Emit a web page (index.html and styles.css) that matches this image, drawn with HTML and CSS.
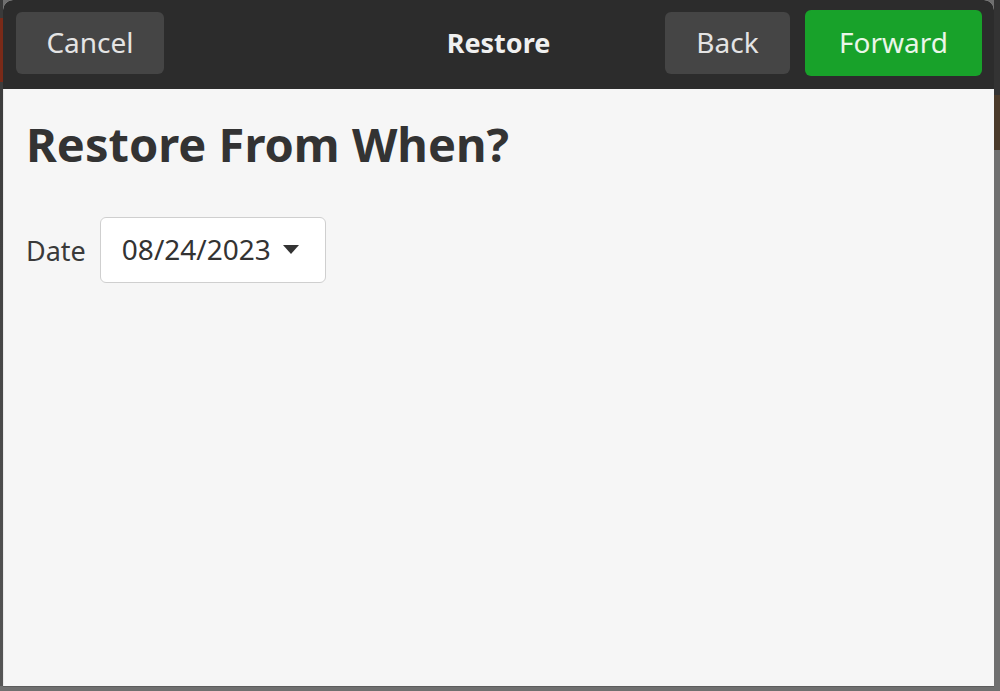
FILE: index.html
```html
<!DOCTYPE html>
<html>
<head>
<meta charset="utf-8">
<link rel="stylesheet" href="styles.css">
</head>
<body>
<div class="desktop">
  <div class="window">
    <header class="headerbar">
      <button class="btn btn-dark btn-cancel">Cancel</button>
      <div class="title">Restore</div>
      <div class="right">
        <button class="btn btn-dark btn-back">Back</button>
        <button class="btn btn-green">Forward</button>
      </div>
    </header>
    <main class="content">
      <h1 class="heading">Restore From When?</h1>
      <div class="row">
        <span class="label">Date</span>
        <button class="combo">08/24/2023<svg class="arrow" width="16" height="9" viewBox="0 0 16 9"><path d="M0 0 H16 L8 9 Z" fill="#333"/></svg></button>
      </div>
    </main>
  </div>
</div>
</body>
</html>
```
FILE: styles.css
```css
html, body {
  margin: 0;
  padding: 0;
  width: 1000px;
  height: 691px;
  overflow: hidden;
  background: #6f6f6f;
  font-family: "Noto Sans", "DejaVu Sans", sans-serif;
}
.desktop {
  width: 1000px;
  height: 691px;
  padding-left: 3px;
  box-sizing: border-box;
  background:
    linear-gradient(to bottom, #3a3a3a 0, #3a3a3a 18px, #7a2a18 18px, #7a2a18 82px, #3c3c3c 82px, #555 686px, #6f6f6f 686px) left top / 3px 691px no-repeat,
    linear-gradient(to bottom, #333 0, #333 95px, #4a3a2a 95px, #4a3a2a 150px, #6f6f6f 150px) right top / 6px 691px no-repeat,
    #6f6f6f;
}
.window {
  width: 991px;
  height: 686px;
  display: flex;
  flex-direction: column;
  background: #f6f6f6;
  border-radius: 10px 10px 0 0;
  overflow: hidden;
  box-shadow: 0 1px 0 #5c5c5c;
}
.headerbar {
  height: 89px;
  background: #2c2c2c;
  display: flex;
  align-items: center;
  padding: 0 12px 4px 13px;
  box-sizing: border-box;
  position: relative;
  flex-shrink: 0;
}
.btn {
  border: none;
  height: 62px;
  border-radius: 6px;
  font-family: "Noto Sans", sans-serif;
  font-size: 28px;
  color: #e4e4e4;
  padding: 0 0 2px 0;
}
.btn-dark {
  background: #454545;
}
.btn-cancel {
  width: 148px;
}
.btn-back {
  width: 125px;
}
.btn-green {
  background: #18a22a;
  color: #eaf6e8;
  width: 177px;
  height: 66px;
}
.title {
  position: absolute;
  left: 0;
  right: 0;
  top: 24px;
  text-align: center;
  font-weight: bold;
  font-size: 27px;
  color: #f0f0f0;
  pointer-events: none;
}
.right {
  margin-left: auto;
  display: flex;
  align-items: center;
  gap: 15px;
}
.content {
  flex: 1;
  padding: 0 22px;
  border-left: 1px solid #e8e8e8;
}
.heading {
  margin: 25px 0 0 0;
  font-size: 47px;
  font-weight: bold;
  color: #333333;
  line-height: 60px;
}
.row {
  display: flex;
  align-items: center;
  margin-top: 43px;
}
.label {
  font-size: 27px;
  color: #3a3a3a;
  margin-right: 14px;
}
.combo {
  height: 66px;
  width: 226px;
  background: #ffffff;
  border: 1px solid #cfcfcf;
  border-radius: 6px;
  font-family: "Noto Sans", sans-serif;
  font-size: 28px;
  color: #333;
  display: flex;
  align-items: center;
  padding: 0 0 2px 21px;
  gap: 12px;
}
.arrow {
  flex-shrink: 0;
}
```
